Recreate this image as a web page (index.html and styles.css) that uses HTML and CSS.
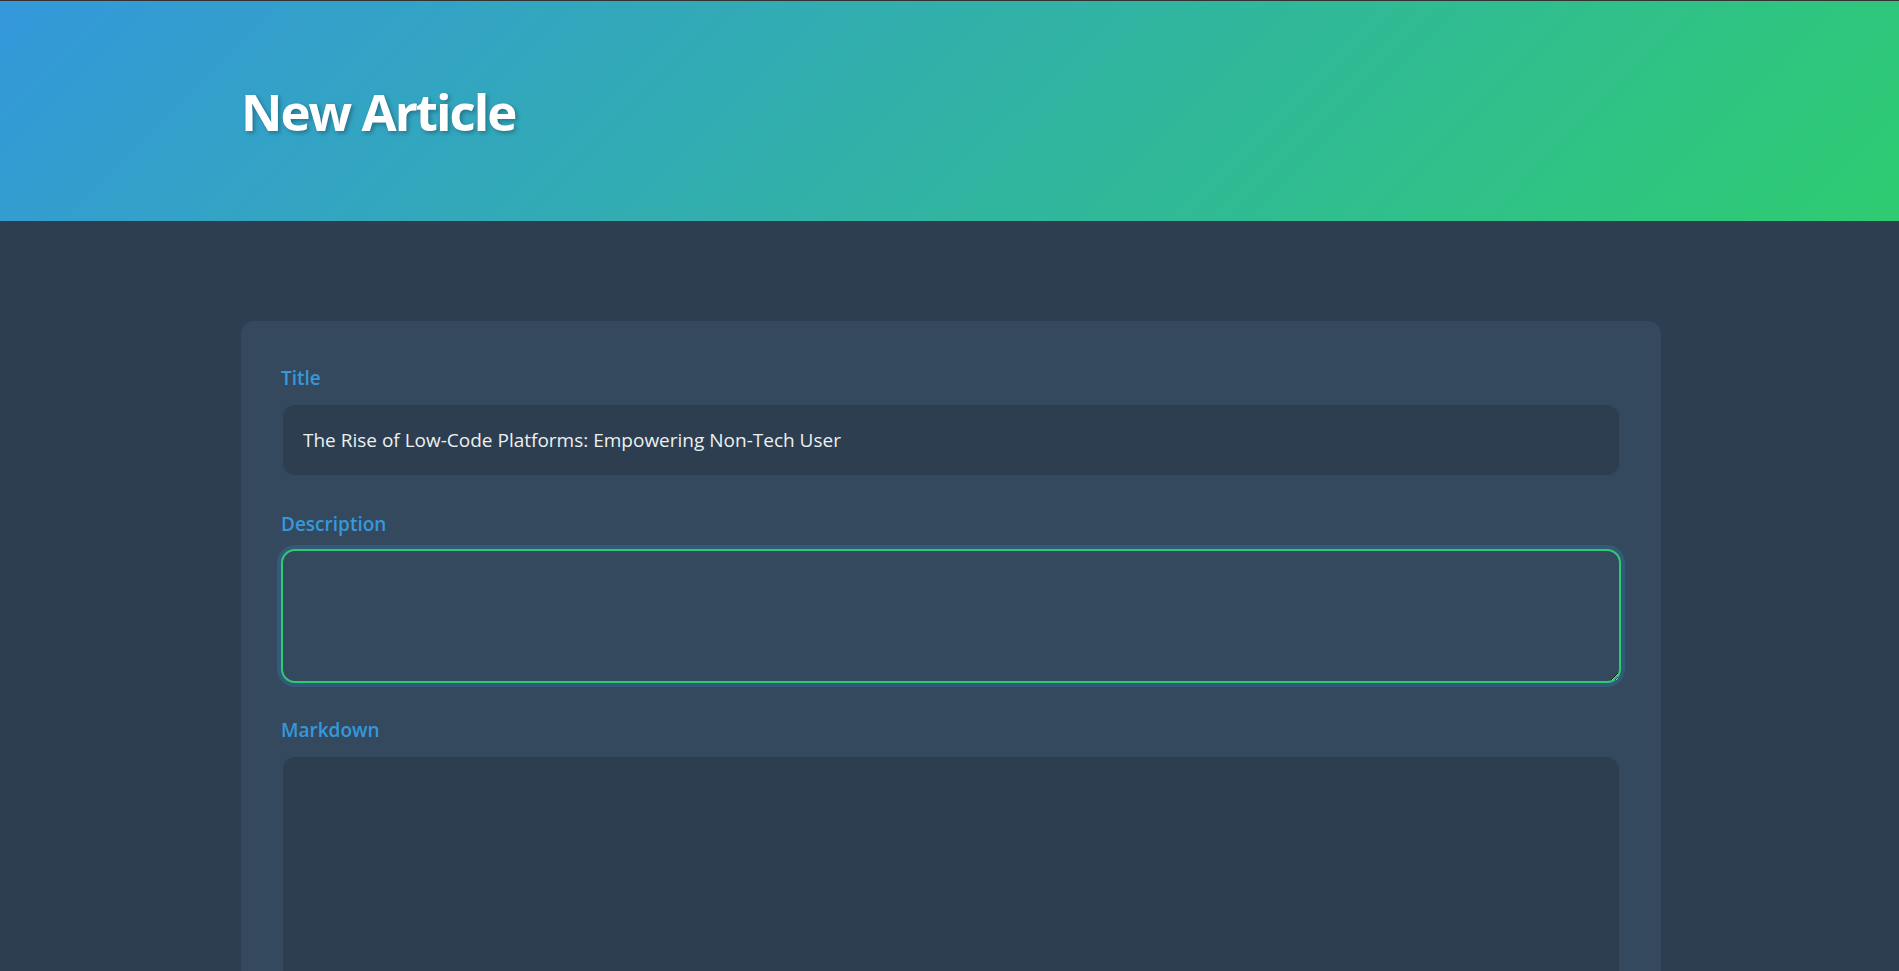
FILE: index.html
```html
<!DOCTYPE html>
<html lang="en">
<head>
<meta charset="utf-8">
<title>New Article</title>
<link rel="stylesheet" href="styles.css">
</head>
<body>
<header class="page-header">
  <div class="container">
    <h1 class="page-title">New Article</h1>
  </div>
</header>
<main class="page-main">
  <div class="container">
    <form class="editor-card">
      <div class="form-group">
        <label class="form-label" for="title">Title</label>
        <input class="form-control" id="title" type="text" value="The Rise of Low-Code Platforms: Empowering Non-Tech User">
      </div>
      <div class="form-group">
        <label class="form-label" for="description">Description</label>
        <textarea class="form-control form-textarea is-focused" id="description" rows="3" autofocus></textarea>
      </div>
      <div class="form-group">
        <label class="form-label" for="markdown">Markdown</label>
        <textarea class="form-control form-textarea form-markdown" id="markdown" rows="12"></textarea>
      </div>
    </form>
  </div>
</main>
</body>
</html>
```
FILE: styles.css
```css
* {
  box-sizing: border-box;
}

html, body {
  margin: 0;
  padding: 0;
}

body {
  background: #2c3e50;
  color: #ecf0f1;
  font-family: "Open Sans", "Noto Sans", sans-serif;
  line-height: 1.6;
}

.container {
  width: 1420px;
  margin-left: calc(50% - 708.5px);
}

.page-header {
  border-top: 1px solid #333;
  height: 221px;
  background: linear-gradient(135deg, #3498db 0%, #2ecc71 100%);
  display: flex;
  align-items: center;
}

.page-title {
  margin: 0;
  padding-top: 2px;
  font-size: 51px;
  font-weight: 700;
  line-height: 1.2;
  color: #ffffff;
  letter-spacing: -2px;
  text-shadow: 2px 2px 4px rgba(0, 0, 0, 0.3);
}

.page-main {
  padding-top: 100px;
}

.editor-card {
  background: #34495e;
  border-radius: 13px;
  padding: 40px;
}

.form-group {
  margin-bottom: 30px;
}

.form-label {
  display: block;
  margin-bottom: 9px;
  padding-top: 1px;
  font-size: 19px;
  font-weight: 600;
  line-height: 32px;
  color: #3498db;
}

.form-control {
  display: block;
  width: 100%;
  margin: 0;
  padding: 20px;
  border: 2px solid #34495e;
  border-radius: 14px;
  background: #2c3e50;
  color: #ecf0f1;
  font-family: "Open Sans", "Noto Sans", sans-serif;
  font-size: 19px;
  line-height: 30px;
  outline: none;
}

.form-textarea {
  height: 134px;
  resize: vertical;
}

.form-markdown {
  height: 400px;
}

.form-control:focus,
.form-control.is-focused {
  border-color: #2ecc71;
  background: #34495e;
  box-shadow: 0 0 0 4px rgba(52, 152, 219, 0.22);
  caret-color: #6b7a88;
}
```
